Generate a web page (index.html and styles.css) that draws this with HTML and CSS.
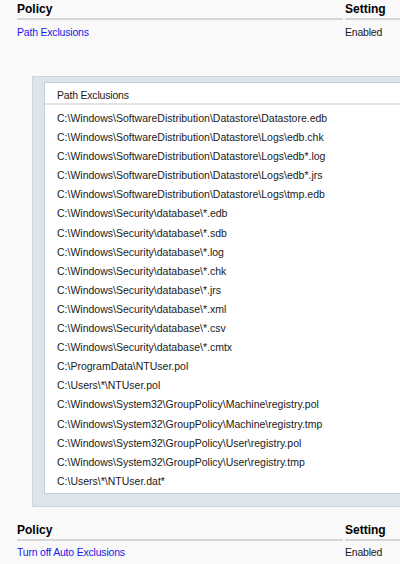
FILE: index.html
```html
<!DOCTYPE html>
<html>
<head>
<meta charset="utf-8">
<link rel="stylesheet" href="styles.css">
</head>
<body>
<div class="page">
  <div class="policy-table">
    <div class="head">
      <div class="col-policy">Policy</div>
      <div class="col-setting">Setting</div>
    </div>
    <div class="row">
      <div class="col-policy link">Path Exclusions</div>
      <div class="col-setting">Enabled</div>
    </div>
  </div>

  <div class="panel">
    <div class="listbox">
      <div class="list-head">Path Exclusions</div>
      <ul class="items">
        <li>C:\Windows\SoftwareDistribution\Datastore\Datastore.edb</li>
        <li>C:\Windows\SoftwareDistribution\Datastore\Logs\edb.chk</li>
        <li>C:\Windows\SoftwareDistribution\Datastore\Logs\edb*.log</li>
        <li>C:\Windows\SoftwareDistribution\Datastore\Logs\edb*.jrs</li>
        <li>C:\Windows\SoftwareDistribution\Datastore\Logs\tmp.edb</li>
        <li>C:\Windows\Security\database\*.edb</li>
        <li>C:\Windows\Security\database\*.sdb</li>
        <li>C:\Windows\Security\database\*.log</li>
        <li>C:\Windows\Security\database\*.chk</li>
        <li>C:\Windows\Security\database\*.jrs</li>
        <li>C:\Windows\Security\database\*.xml</li>
        <li>C:\Windows\Security\database\*.csv</li>
        <li>C:\Windows\Security\database\*.cmtx</li>
        <li>C:\ProgramData\NTUser.pol</li>
        <li>C:\Users\*\NTUser.pol</li>
        <li>C:\Windows\System32\GroupPolicy\Machine\registry.pol</li>
        <li>C:\Windows\System32\GroupPolicy\Machine\registry.tmp</li>
        <li>C:\Windows\System32\GroupPolicy\User\registry.pol</li>
        <li>C:\Windows\System32\GroupPolicy\User\registry.tmp</li>
        <li>C:\Users\*\NTUser.dat*</li>
      </ul>
    </div>
  </div>

  <div class="policy-table second">
    <div class="head">
      <div class="col-policy">Policy</div>
      <div class="col-setting">Setting</div>
    </div>
    <div class="row">
      <div class="col-policy link">Turn off Auto Exclusions</div>
      <div class="col-setting">Enabled</div>
    </div>
  </div>
</div>
</body>
</html>
```

FILE: styles.css
```css
html, body {
  margin: 0;
  padding: 0;
  background: #f9f9f9;
}
body {
  font-family: "Liberation Sans", Arial, sans-serif;
  font-size: 10.5px;
  letter-spacing: -0.2px;
  color: #1a1a1a;
  width: 400px;
  height: 564px;
  overflow: hidden;
}
.page {
  padding-left: 17px;
}
.policy-table .head {
  display: grid;
  grid-template-columns: 326px 1fr;
  column-gap: 2px;
  height: 20px;
}
.policy-table .head > div {
  font-weight: bold;
  font-size: 12px;
  letter-spacing: 0;
  line-height: 18px;
  border-bottom: 2px solid #d6d6d6;
  color: #000;
}
.policy-table .row {
  display: grid;
  grid-template-columns: 326px 1fr;
  column-gap: 2px;
  height: 24px;
  line-height: 24px;
}
.second .row {
  line-height: 22px;
}
.link {
  color: #1a1ae6;
}
.panel {
  margin-left: 15px;
  margin-top: 32px;
  background: #dce4ec;
  border: 1px solid #cdd5dd;
  border-right: none;
  padding: 5px 0 12px 11px;
}
.listbox {
  background: #ffffff;
  border: 1px solid #c9cfd6;
  border-right: none;
}
.list-head {
  height: 20px;
  line-height: 24px;
  padding-left: 12px;
  border-bottom: 2px solid #e3e3e3;
}
.items {
  list-style: none;
  margin: 0;
  padding: 4px 0 2px 12px;
  letter-spacing: 0;
}
.items li {
  height: 19.1px;
  line-height: 19px;
  white-space: nowrap;
}
.second {
  margin-top: 14px;
}
```
